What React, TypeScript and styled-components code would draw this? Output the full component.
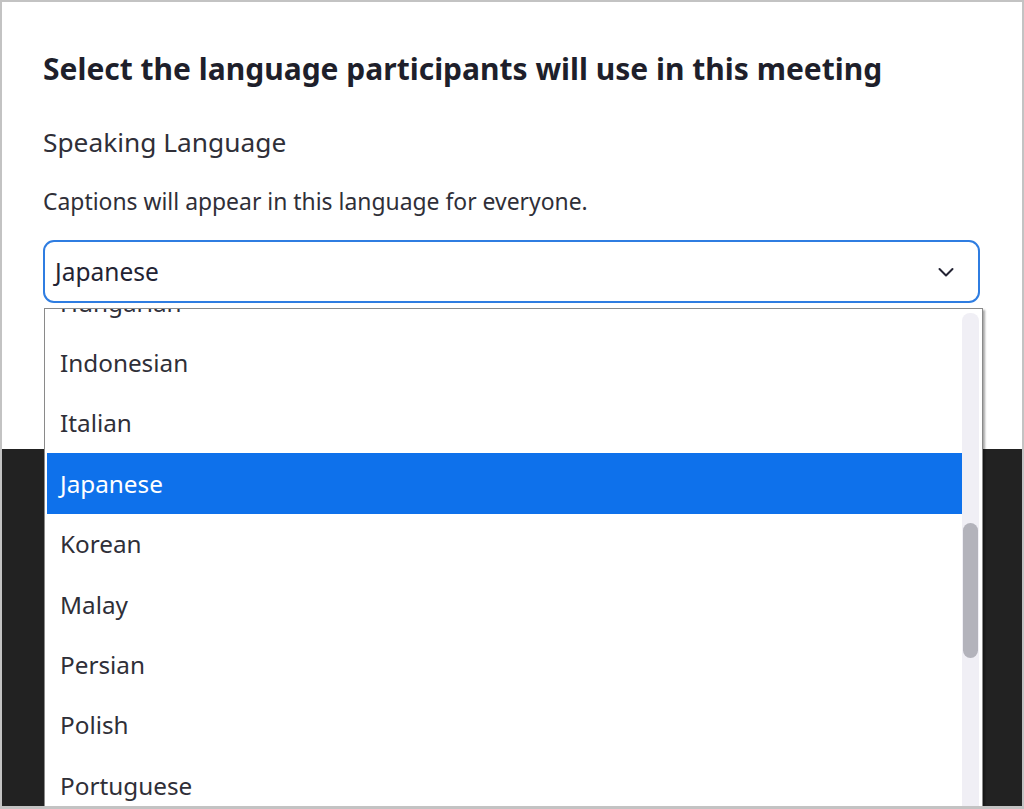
import React from "react";
import styled, { createGlobalStyle } from "styled-components";

const Global = createGlobalStyle`
  html, body { margin: 0; padding: 0; }
  body { font-family: "Noto Sans", "Open Sans", sans-serif; }
  * { box-sizing: border-box; }
`;

const Frame = styled.div`
  width: 1024px;
  height: 809px;
  border: 2px solid #c3c3c3;
  border-bottom-width: 3px;
  overflow: hidden;
  display: grid;
  grid-template-rows: 447px 1fr;
  background: #222222;
`;

const Panel = styled.div`
  background: #ffffff;
  padding: 47px 41px 0 41px;
  display: flex;
  flex-direction: column;
`;

const Title = styled.h1`
  margin: 0;
  font-size: 30px;
  font-weight: 700;
  color: #1e1f2b;
  line-height: 40px;
  white-space: nowrap;
`;

const Label = styled.div`
  margin-top: 36px;
  font-size: 26.3px;
  color: #2f2f38;
  line-height: 34px;
`;

const Hint = styled.div`
  margin-top: 28px;
  font-size: 22.9px;
  color: #2f2f38;
  line-height: 30px;
  white-space: nowrap;
`;

const SelectWrap = styled.div`
  position: relative;
  margin-top: 23px;
  width: 937px;
`;

const SelectBox = styled.div`
  height: 63px;
  border: 2px solid #2f7de1;
  border-radius: 11px;
  display: flex;
  align-items: center;
  justify-content: space-between;
  padding: 0 23px 0 10px;
  font-size: 24.5px;
  color: #232333;
`;

const Chevron = styled.svg`
  width: 18px;
  height: 18px;
`;

const Dropdown = styled.div`
  position: absolute;
  top: 68px;
  left: 1px;
  width: 939px;
  height: 520px;
  background: #ffffff;
  border: 1px solid #8a8a8a;
  box-shadow: 2px 2px 2px rgba(0, 0, 0, 0.35);
  display: grid;
  grid-template-columns: 1fr 20px;
  overflow: hidden;
`;

const List = styled.div`
  display: flex;
  flex-direction: column;
  margin-top: -37px;
  padding-left: 2px;
`;

const Item = styled.div<{ $active?: boolean }>`
  height: 60.4px;
  flex: none;
  display: flex;
  align-items: center;
  padding-left: 13px;
  font-size: 24.3px;
  color: ${(p) => (p.$active ? "#ffffff" : "#2f2f38")};
  background: ${(p) => (p.$active ? "#0e71eb" : "transparent")};
`;

const Track = styled.div`
  margin: 4px 3px 0 0;
  background: #f0eff5;
  border-radius: 8px;
  position: relative;
`;

const Thumb = styled.div`
  position: absolute;
  left: 1px;
  right: 1px;
  top: 210px;
  height: 135px;
  background: #b3b3bb;
  border-radius: 8px;
`;

const items = [
  "Hungarian",
  "Indonesian",
  "Italian",
  "Japanese",
  "Korean",
  "Malay",
  "Persian",
  "Polish",
  "Portuguese",
  "Romanian",
];

export default function App() {
  return (
    <>
      <Global />
      <Frame>
        <Panel>
          <Title>Select the language participants will use in this meeting</Title>
          <Label>Speaking Language</Label>
          <Hint>Captions will appear in this language for everyone.</Hint>
          <SelectWrap>
            <SelectBox>
              <span>Japanese</span>
              <Chevron viewBox="0 0 18 18" fill="none">
                <path d="M2.5 6l6.5 6.5L15.5 6" stroke="#232333" strokeWidth="2" strokeLinecap="round" strokeLinejoin="round" />
              </Chevron>
            </SelectBox>
            <Dropdown>
              <List>
                {items.map((it) => (
                  <Item key={it} $active={it === "Japanese"}>
                    {it}
                  </Item>
                ))}
              </List>
              <Track>
                <Thumb />
              </Track>
            </Dropdown>
          </SelectWrap>
        </Panel>
        <div />
      </Frame>
    </>
  );
}
